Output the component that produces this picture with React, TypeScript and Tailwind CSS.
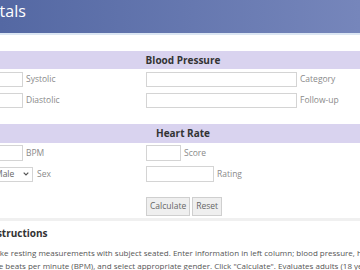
export default function App() {
  const font = { fontFamily: '"Open Sans", "Liberation Sans", sans-serif' };
  return (
    <div className="h-[270px] w-[360px] overflow-hidden bg-white" style={font}>
      <header className="h-[35px] border-b-2 border-[#dbe6f3] bg-gradient-to-r from-[#5468a3] to-[#7686bb]">
        <h1 className="-ml-[14px] pt-[1px] text-[16px] leading-[20px] text-white">Vitals</h1>
      </header>

      <section className="mt-[16px]">
        <div className="flex h-[18px] items-center justify-center bg-[#d9d3ef] pl-[6px] text-[10px] font-bold text-[#333]">
          Blood Pressure
        </div>
        <div className="mt-[3px] flex h-[15px] items-center">
          <div className="flex w-[146px] items-center">
            <input className="-ml-[40px] h-[15px] w-[63px] border border-[#d4d4d4]" />
            <span className="ml-[3px] text-[8.5px] text-[#8a8a8a]">Systolic</span>
          </div>
          <input className="h-[15px] w-[151px] border border-[#d4d4d4]" />
          <span className="ml-[3px] text-[8.5px] text-[#8a8a8a]">Category</span>
        </div>
        <div className="mt-[6px] flex h-[15px] items-center">
          <div className="flex w-[146px] items-center">
            <input className="-ml-[40px] h-[15px] w-[63px] border border-[#d4d4d4]" />
            <span className="ml-[3px] text-[8.5px] text-[#8a8a8a]">Diastolic</span>
          </div>
          <input className="h-[15px] w-[151px] border border-[#d4d4d4]" />
          <span className="ml-[3px] text-[8.5px] text-[#8a8a8a]">Follow-up</span>
        </div>
      </section>

      <section className="mt-[16px]">
        <div className="flex h-[19px] items-center justify-center bg-[#d9d3ef] pl-[6px] text-[10px] font-bold text-[#333]">
          Heart Rate
        </div>
        <div className="mt-[2px] flex h-[16px] items-center">
          <div className="flex w-[146px] items-center">
            <input className="-ml-[40px] h-[16px] w-[63px] border border-[#d4d4d4]" />
            <span className="ml-[3px] text-[8.5px] text-[#8a8a8a]">BPM</span>
          </div>
          <input className="h-[16px] w-[35px] border border-[#d4d4d4]" />
          <span className="ml-[3px] text-[8.5px] text-[#8a8a8a]">Score</span>
        </div>
        <div className="mt-[5px] flex h-[16px] items-center">
          <div className="flex w-[146px] items-center">
            <div className="-ml-[40px] flex h-[15px] w-[73px] items-center justify-between border border-[#d4d4d4] pl-[4px] pr-[3px] text-[8.5px] text-[#666]">
              <span className="pl-[30px]">Male</span>
              <svg width="6" height="4" viewBox="0 0 6 4" fill="none" stroke="#555" strokeWidth="1.2">
                <path d="M0.7 0.7 L3 3 L5.3 0.7" />
              </svg>
            </div>
            <span className="ml-[4px] text-[8.5px] text-[#8a8a8a]">Sex</span>
          </div>
          <input className="h-[16px] w-[68px] border border-[#d4d4d4]" />
          <span className="ml-[3px] text-[8.5px] text-[#8a8a8a]">Rating</span>
        </div>
        <div className="mt-[15px] flex h-[19px] items-center gap-[2px] pl-[146px]">
          <button className="h-[19px] border border-[#cfcfcf] bg-[#efefef] px-[3px] text-[8.5px] text-[#666]">Calculate</button>
          <button className="h-[19px] border border-[#cfcfcf] bg-[#efefef] px-[3px] text-[8.5px] text-[#666]">Reset</button>
        </div>
        <div className="mt-[2px] h-[3px] bg-[#f0f0f0]" />
      </section>

      <section className="mt-[5px]">
        <h2 className="-ml-[13px] text-[10px] font-bold leading-[14px] text-[#333]">Instructions</h2>
        <p className="-ml-[9px] mt-[6px] text-[8px] leading-[13px] text-[#555]">
          <span className="block whitespace-nowrap">
            Take resting measurements with subject seated. Enter information in left column; blood pressure, heart rate as
          </span>
          <span className="block whitespace-nowrap">
            the beats per minute (BPM), and select appropriate gender. Click "Calculate". Evaluates adults (18 years and older).
          </span>
        </p>
      </section>
    </div>
  );
}
